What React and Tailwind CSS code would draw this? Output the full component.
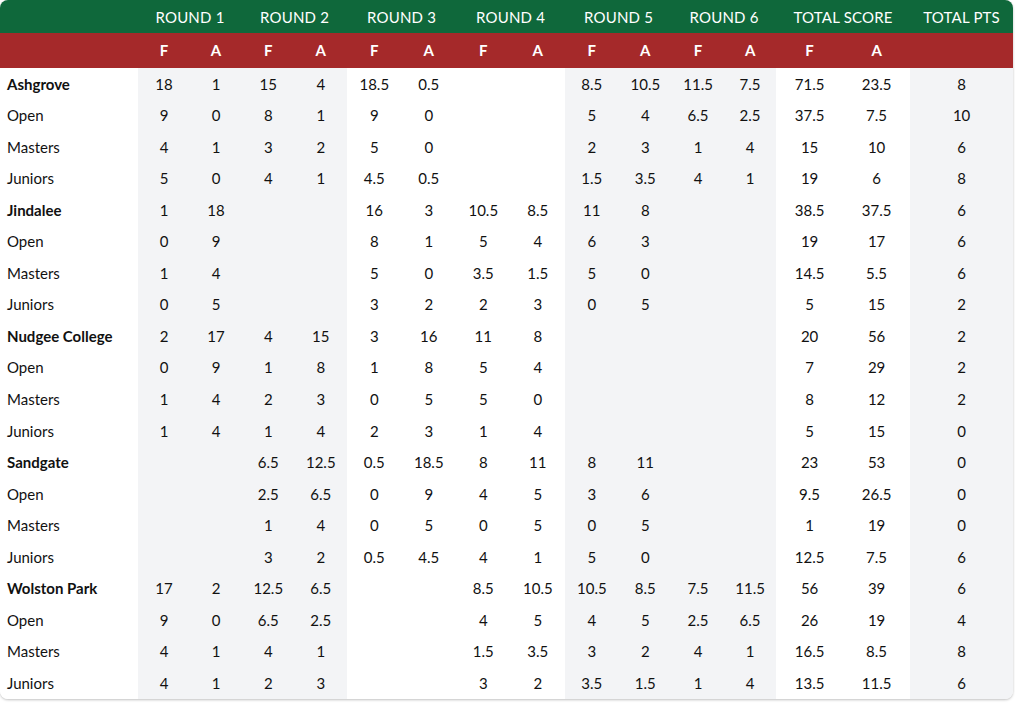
import React from "react";

const widths = [138, 52, 52, 52.5, 52.5, 54.5, 54.5, 54.5, 54.5, 53.5, 53.5, 52, 52, 67, 67, 103];
const bgFor = (i) => {
  if (i === 0) return "bg-white";
  if (i <= 4) return "bg-[#f3f4f6]";
  if (i <= 8) return "bg-white";
  if (i <= 12) return "bg-[#f3f4f6]";
  if (i <= 14) return "bg-white";
  return "bg-[#f3f4f6]";
};

const rows = [
  ["Ashgrove", true, "18", "1", "15", "4", "18.5", "0.5", "", "", "8.5", "10.5", "11.5", "7.5", "71.5", "23.5", "8"],
  ["Open", false, "9", "0", "8", "1", "9", "0", "", "", "5", "4", "6.5", "2.5", "37.5", "7.5", "10"],
  ["Masters", false, "4", "1", "3", "2", "5", "0", "", "", "2", "3", "1", "4", "15", "10", "6"],
  ["Juniors", false, "5", "0", "4", "1", "4.5", "0.5", "", "", "1.5", "3.5", "4", "1", "19", "6", "8"],
  ["Jindalee", true, "1", "18", "", "", "16", "3", "10.5", "8.5", "11", "8", "", "", "38.5", "37.5", "6"],
  ["Open", false, "0", "9", "", "", "8", "1", "5", "4", "6", "3", "", "", "19", "17", "6"],
  ["Masters", false, "1", "4", "", "", "5", "0", "3.5", "1.5", "5", "0", "", "", "14.5", "5.5", "6"],
  ["Juniors", false, "0", "5", "", "", "3", "2", "2", "3", "0", "5", "", "", "5", "15", "2"],
  ["Nudgee College", true, "2", "17", "4", "15", "3", "16", "11", "8", "", "", "", "", "20", "56", "2"],
  ["Open", false, "0", "9", "1", "8", "1", "8", "5", "4", "", "", "", "", "7", "29", "2"],
  ["Masters", false, "1", "4", "2", "3", "0", "5", "5", "0", "", "", "", "", "8", "12", "2"],
  ["Juniors", false, "1", "4", "1", "4", "2", "3", "1", "4", "", "", "", "", "5", "15", "0"],
  ["Sandgate", true, "", "", "6.5", "12.5", "0.5", "18.5", "8", "11", "8", "11", "", "", "23", "53", "0"],
  ["Open", false, "", "", "2.5", "6.5", "0", "9", "4", "5", "3", "6", "", "", "9.5", "26.5", "0"],
  ["Masters", false, "", "", "1", "4", "0", "5", "0", "5", "0", "5", "", "", "1", "19", "0"],
  ["Juniors", false, "", "", "3", "2", "0.5", "4.5", "4", "1", "5", "0", "", "", "12.5", "7.5", "6"],
  ["Wolston Park", true, "17", "2", "12.5", "6.5", "", "", "8.5", "10.5", "10.5", "8.5", "7.5", "11.5", "56", "39", "6"],
  ["Open", false, "9", "0", "6.5", "2.5", "", "", "4", "5", "4", "5", "2.5", "6.5", "26", "19", "4"],
  ["Masters", false, "4", "1", "4", "1", "", "", "1.5", "3.5", "3", "2", "4", "1", "16.5", "8.5", "8"],
  ["Juniors", false, "4", "1", "2", "3", "", "", "3", "2", "3.5", "1.5", "1", "4", "13.5", "11.5", "6"],
];

const groups = [
  ["ROUND 1", 2],
  ["ROUND 2", 2],
  ["ROUND 3", 2],
  ["ROUND 4", 2],
  ["ROUND 5", 2],
  ["ROUND 6", 2],
  ["TOTAL SCORE", 2],
  ["TOTAL PTS", 1],
];

export default function App() {
  return (
    <div className="bg-white w-[1015px] h-[704px] overflow-hidden" style={{ fontFamily: "Lato, 'Open Sans', sans-serif" }}>
      <div className="w-[1013px] rounded-lg overflow-hidden shadow-[0_1px_3px_rgba(0,0,0,0.18),0_1px_2px_rgba(0,0,0,0.08)] bg-white">
        <table className="table-fixed border-collapse w-[1013px] text-[#111]">
          <colgroup>
            {widths.map((w, i) => (
              <col key={i} style={{ width: w }} />
            ))}
          </colgroup>
          <thead>
            <tr className="h-[33px] bg-[#0f683b] text-white">
              <th></th>
              {groups.map(([g, span]) => (
                <th key={g} colSpan={span} className="font-normal text-[15px] text-center tracking-[0.2px] pt-[1px]">
                  {g}
                </th>
              ))}
            </tr>
            <tr className="h-[35px] bg-[#a5292a] text-white">
              <th></th>
              {["F", "A", "F", "A", "F", "A", "F", "A", "F", "A", "F", "A", "F", "A"].map((l, i) => (
                <th key={i} className="font-bold text-[15px] text-center">
                  {l}
                </th>
              ))}
              <th></th>
            </tr>
          </thead>
          <tbody>
            {rows.map((r, ri) => (
              <tr key={ri} className="h-[31.55px]">
                <td className={`pl-[7px] text-[15px] whitespace-nowrap ${r[1] ? "font-bold" : "font-normal"} bg-white`}>
                  {r[0]}
                </td>
                {r.slice(2).map((v, ci) => (
                  <td key={ci} className={`text-center text-[15px] ${bgFor(ci + 1)}`}>
                    {v}
                  </td>
                ))}
              </tr>
            ))}
          </tbody>
        </table>
      </div>
    </div>
  );
}
